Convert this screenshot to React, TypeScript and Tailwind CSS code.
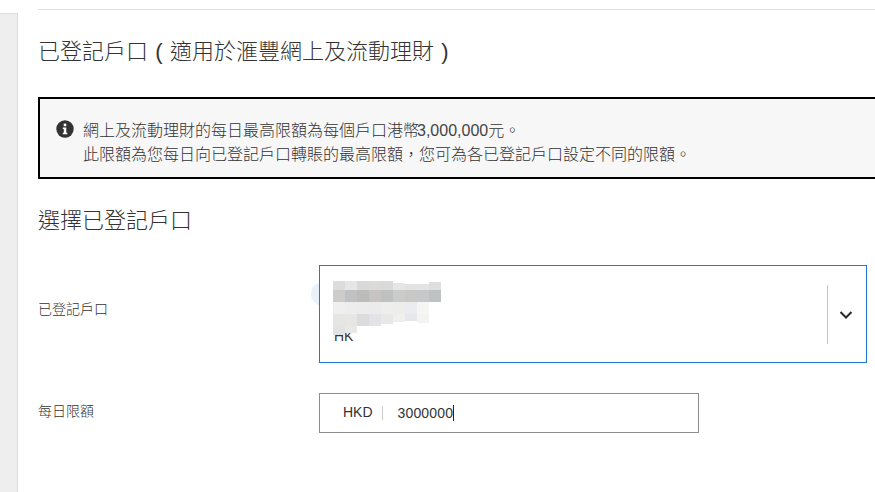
const font = { fontFamily: '"Liberation Sans", "Noto Sans CJK TC", sans-serif' }

// blurred-out account name from the screenshot
const mosaic: [number, number, number, number, string][] = [
  [0, 0, 12, 9, '#dcdcdc'], [12, 0, 12, 9, '#e6e6e6'], [24, 0, 12, 9, '#d9d9d8'], [36, 0, 12, 9, '#dbdbda'],
  [48, 0, 12, 9, '#dadad9'], [60, 2, 12, 7, '#e6e6e6'], [72, 3, 12, 6, '#e2e2e1'], [84, 3, 12, 6, '#e4e4e4'], [96, 1, 12, 8, '#dfdfdf'],
  [0, 9, 12, 12, '#cdcccb'], [12, 9, 12, 12, '#bfc1c3'], [24, 9, 12, 12, '#bcbdb9'], [36, 9, 12, 12, '#c7c3c0'],
  [48, 9, 12, 12, '#bfc1c1'], [60, 9, 12, 12, '#cbcbcc'], [72, 9, 12, 12, '#c8c9c6'], [84, 9, 12, 12, '#c7c8c9'], [96, 9, 12, 12, '#bfc2c2'],
  [0, 21, 12, 12, '#efefef'], [12, 21, 12, 12, '#ededed'], [24, 21, 12, 12, '#ececec'], [36, 21, 12, 12, '#ebebec'],
  [48, 21, 12, 12, '#eeeeef'], [60, 21, 12, 12, '#ededec'], [72, 21, 12, 12, '#ebecef'], [84, 21, 12, 12, '#f5f5f4'],
  [0, 33, 12, 12, '#e5e5e4'], [12, 33, 12, 12, '#e6e6e5'], [24, 33, 12, 12, '#dcdcde'], [36, 33, 12, 12, '#e2e3e6'],
  [48, 33, 12, 10, '#e9e8e7'], [60, 33, 12, 8, '#efefee'], [72, 33, 12, 7, '#e6e7ea'], [84, 33, 12, 9, '#f3f3f2'],
  [0, 45, 12, 9, '#e3e3e4'], [12, 45, 12, 7, '#e8e8e7'],
]

export default function App() {
  return (
    <div className="flex h-[492px] w-[875px] overflow-hidden bg-white" style={font}>
      <div className="mt-[13px] w-[18px] shrink-0 border-t border-r border-[#dcdcdc] bg-[#eeeeee]" />
      <main className="min-w-0 flex-1 pl-[20px] pt-[9px]">
        <div className="h-px w-full bg-[#e2e2e2]" />
        <h1 className="mt-[28px] text-[22px] leading-[28px] font-light text-[#333333] whitespace-nowrap">
          已登記戶口<span className="inline-block w-[22px] text-center">(</span>適用於滙豐網上及流動理財<span className="inline-block w-[22px] text-center">)</span>
        </h1>
        <div className="mt-[31px] flex h-[82px] w-[860px] gap-[10px] border-[2px] border-black bg-[#f7f7f7] pl-[16px] pt-[20px]">
          <svg viewBox="0 0 18 18" className="mt-[1px] h-[18px] w-[18px] shrink-0">
            <circle cx="9" cy="9" r="8.7" fill="#333333" />
            <rect x="7.7" y="3.6" width="2.6" height="2.6" fill="#fff" />
            <path d="M6.8 7.5h3.5v5.2h1v1.6H6.800v-1.600h1v-3.600h-1z" fill="#fff" />
          </svg>
          <div className="-ml-[1px] text-[16px] leading-[24px] font-light text-[#333333] whitespace-nowrap">
            <p>網上及流動理財的每日最高限額為每個戶口港幣<span className="-ml-[2px] text-[#444444]">3,000,000</span>元。</p>
            <p>此限額為您每日向已登記戶口轉賬的最高限額，您可為各已登記戶口設定不同的限額。</p>
          </div>
        </div>
        <h2 className="mt-[28px] text-[22px] leading-[28px] font-light text-[#333333]">選擇已登記戶口</h2>

        <div className="mt-[30px] flex">
          <label className="flex w-[281px] items-center pb-[10px] text-[14px] font-light text-[#333333]">已登記戶口</label>
          <div className="relative h-[98px] w-[548px]">
            <div className="absolute top-[17px] -left-[8px] h-[24px] w-[24px] rounded-full bg-[#e9f1fb]" />
            <div className="relative h-full w-full border border-[#1f78d1] bg-white">
              <span className="absolute left-[14px] top-[60px] text-[14px] leading-[20px] text-[#333333]">HK</span>
              <svg width="108" height="54" className="absolute left-[13px] top-[15px]">
                {mosaic.map(([x, y, w, h, fill], i) => (
                  <rect key={i} x={x} y={y} width={w} height={h} fill={fill} />
                ))}
              </svg>
              <div className="absolute left-[507px] top-[19px] h-[59px] w-px bg-[#c4c4c4]" />
              <svg viewBox="0 0 14 10" className="absolute left-[519px] top-[44px] h-[10px] w-[14px]">
                <path d="M1.500 2l5.500 5.500L12.500 2" fill="none" stroke="#2b2b2b" strokeWidth="2" />
              </svg>
            </div>
          </div>
        </div>

        <div className="mt-[30px] flex">
          <label className="flex w-[281px] items-center pb-[4px] text-[14px] font-light text-[#333333]">每日限額</label>
          <div className="flex h-[40px] w-[380px] items-center border border-[#8c8c8c] pl-[23px] text-[14px] text-[#333333]">
            <span className="-mt-[1px]">HKD</span>
            <span className="ml-[9px] h-[14px] w-px bg-[#cccccc]" />
            <span className="ml-[15px] tracking-[0.15px]">3000000</span>
            <span className="h-[16px] w-px bg-[#222222]" />
          </div>
        </div>
      </main>
    </div>
  )
}
